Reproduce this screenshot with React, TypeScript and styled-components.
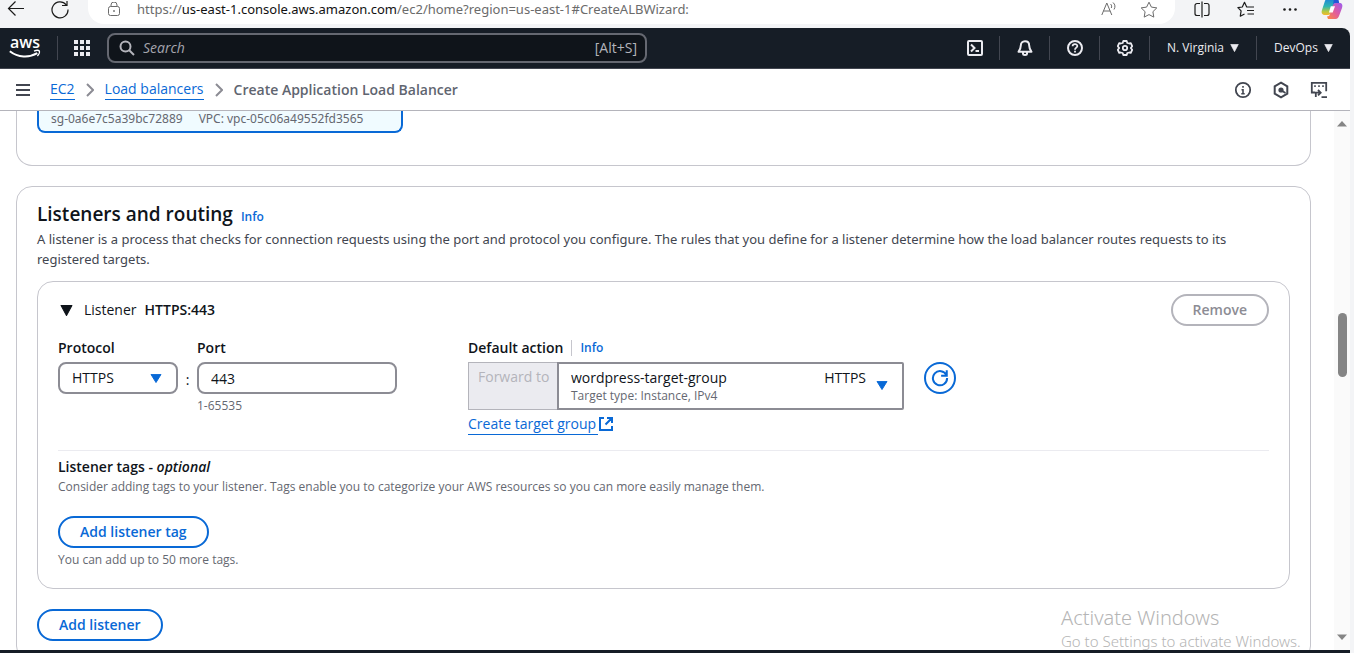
import React from "react";
import styled, { createGlobalStyle } from "styled-components";

const ui = `"Open Sans", "Noto Sans", sans-serif`;
const system = `"Noto Sans", "Open Sans", sans-serif`;
const blue = "#0969d6";

const GlobalStyle = createGlobalStyle`
  * { box-sizing: border-box; }
  body { margin: 0; overflow: hidden; }
  button, input, select { font: inherit; color: inherit; }
  h1, h2, p { margin: 0; }
`;

const Page = styled.div`
  position: relative;
  display: flex;
  flex-direction: column;
  height: 100vh;
  background: #f3f4f6;
  color: #0f141a;
  font: 14px/20px ${ui};
`;

/* Browser toolbar */
const BrowserBar = styled.div`
  display: flex;
  flex: none;
  height: 28px;
  color: #1b1b1b;
`;
const BrowserButton = styled.button`
  display: flex;
  flex: none;
  width: ${(p: { $width?: number }) => p.$width ?? 44}px;
  height: 20px;
  padding: 0;
  border: 0;
  background: none;
  justify-content: center;
  align-items: center;
  svg { display: block; }
`;
const BrowserNav = styled.div`
  display: flex;
  width: 88px;
`;
const AddressBar = styled.div`
  display: flex;
  flex: 1;
  height: 24px;
  padding: 0 6px 0 17px;
  border-radius: 0 0 16px 16px;
  background: #fff;
  color: #6b6b6b;
`;
const Url = styled.div`
  flex: 1;
  padding-left: 14px;
  font: 13px/18px ${system};
  white-space: nowrap;
  b { font-weight: 400; color: #111; }
`;
const BrowserActions = styled.div`
  display: flex;
  padding-left: 5px;
  padding-right: 2px;
`;

/* Console window */
const Console = styled.div`
  display: flex;
  flex: 1;
  min-height: 0;
  flex-direction: column;
  margin-right: 4px;
  border-bottom: 3px solid #161d26;
  border-radius: 0 8px 0 0;
  overflow: hidden;
  background: #fff;
`;
const TopNav = styled.header`
  display: flex;
  flex: none;
  height: 41px;
  align-items: center;
  border-bottom: 1px solid #424650;
  background: #161d26;
  color: #ebebf0;
`;
const LogoLink = styled.a`
  display: flex;
  width: 57px;
  padding-left: 9px;
`;
const AppsButton = styled.button`
  display: flex;
  width: 50px;
  height: 24px;
  align-items: center;
  padding: 0 2px 0 0;
  border: 0;
  border-left: 1px solid #424650;
  background: none;
  justify-content: center;
`;
const SearchBox = styled.label`
  display: flex;
  flex: 0 1 540px;
  height: 30px;
  align-items: center;
  gap: 8px;
  padding: 0 8px 0 10px;
  border: 2px solid #656871;
  border-radius: 8px;
  background: #0f141a;
  color: #b4b4bb;
`;
const SearchInput = styled.input`
  flex: 1;
  min-width: 0;
  padding: 0;
  border: 0;
  outline: 0;
  background: none;
  &::placeholder { color: #a4a4ad; font-style: italic; opacity: 1; }
`;
const NavTools = styled.nav`
  display: flex;
  margin-left: auto;
`;
const NavButton = styled.button<{ $width?: number }>`
  display: flex;
  width: ${(p) => p.$width ?? 50}px;
  height: 24px;
  align-items: center;
  justify-content: center;
  gap: 6px;
  padding: 0;
  border: 0;
  border-right: 1px solid #424650;
  background: none;
  font-size: 12px;
  font-weight: 500;
  white-space: nowrap;
  &:last-child { border-right: 0; }
`;

const CrumbBar = styled.div`
  display: flex;
  flex: none;
  height: 42px;
  align-items: center;
  padding: 0 22px 0 15px;
  border-bottom: 1px solid #b4b4bb;
`;
const Crumbs = styled.nav`
  display: flex;
  flex: 1;
  align-items: center;
  gap: 11px;
  margin-left: 19px;
  color: #5f6570;
`;
const Link = styled.a`
  color: ${blue};
  text-decoration: none;
  border-bottom: 1px solid ${blue};
  line-height: 20px;
`;
const Current = styled.span`
  font-weight: 600;
`;
const IconButton = styled.button`
  display: flex;
  padding: 0;
  border: 0;
  background: none;
  color: #424650;
`;
const PanelIcons = styled.div`
  display: flex;
  gap: 20px;
`;

const Body = styled.div`
  display: flex;
  flex: 1;
  min-height: 0;
`;
const Content = styled.main`
  display: flex;
  flex: 1;
  flex-direction: column;
  gap: 20px;
  min-width: 0;
  padding: 0 23px 0 16px;
  overflow: hidden;
`;
const Scrollbar = styled.div`
  display: flex;
  width: 16px;
  flex-direction: column;
  align-items: center;
  padding: 9px 0;
  background: #fafafa;
  color: #858585;
`;
const ScrollSpace = styled.div<{ $grow: number }>`
  flex: ${(p) => p.$grow};
`;
const Thumb = styled.div`
  width: 9px;
  height: 64px;
  border-radius: 5px;
  background: #858585;
`;

const PreviousPanel = styled.section`
  flex: none;
  padding: 0 20px 32px;
  border: 1px solid #c6c6cd;
  border-top: 0;
  border-radius: 0 0 16px 16px;
`;
const SecurityToken = styled.div`
  display: flex;
  width: 366px;
  gap: 16px;
  padding: 0 12px 4px;
  border: 2px solid ${blue};
  border-top: 0;
  border-radius: 0 0 8px 8px;
  background: #f0fbff;
  color: #656871;
  font: 12px/16px ${system};
`;
const Panel = styled.section`
  flex: none;
  padding: 15px 20px 20px;
  border: 1px solid #c6c6cd;
  border-radius: 16px;
`;
const TitleRow = styled.div`
  display: flex;
  align-items: baseline;
  gap: 8px;
`;
const Title = styled.h1`
  font-size: 19px;
  line-height: 24px;
  font-weight: 600;
`;
const InfoLink = styled.a`
  color: ${blue};
  font-size: 12px;
  font-weight: 600;
  text-decoration: none;
`;
const Description = styled.p`
  margin-top: 2px;
  color: #424650;
  font-family: ${system};
  font-size: 13px;
`;
const Card = styled.section`
  margin: 12px 0 20px;
  padding: 12px 20px 20px;
  border: 1px solid #c6c6cd;
  border-radius: 16px;
`;
const CardHeader = styled.div`
  display: flex;
  align-items: center;
  justify-content: space-between;
`;
const Expander = styled.button`
  display: flex;
  align-items: center;
  gap: 8px;
  padding: 0;
  border: 0;
  background: none;
  svg { margin: 0 3px 0 2px; }
  b { font-weight: 600; }
`;
const PillButton = styled.button`
  height: 32px;
  padding: 0 20px;
  border: 2px solid ${blue};
  border-radius: 16px;
  background: #fff;
  color: ${blue};
  font-weight: 600;
  line-height: 20px;
  white-space: nowrap;
  &:disabled { border-color: #b4b4bb; color: #8c8c94; }
`;
const Fields = styled.div`
  display: grid;
  grid-template-columns: 400fr 801fr;
  column-gap: 10px;
  margin-top: 12px;
`;
const PortGroup = styled.div`
  display: flex;
`;
const Field = styled.div<{ $width: number }>`
  display: flex;
  width: ${(p) => p.$width}px;
  flex-direction: column;
  gap: 4px;
`;
const Label = styled.label`
  font-weight: 600;
`;
const Colon = styled.span`
  width: 19px;
  padding-top: 32px;
  text-align: center;
`;
const SelectBox = styled.div`
  display: flex;
  height: 32px;
  align-items: center;
  padding: 0 14px 0 12px;
  border: 2px solid #8c8c94;
  border-radius: 8px;
`;
const PlainSelect = styled.select<{ $fixed?: boolean }>`
  flex: ${(p) => (p.$fixed ? "none" : 1)};
  min-width: 0;
  height: 20px;
  padding: 0;
  border: 0;
  outline: 0;
  appearance: none;
  background: none;
  line-height: 20px;
`;
const TextInput = styled.input`
  height: 32px;
  padding: 0 12px;
  border: 2px solid #8c8c94;
  border-radius: 8px;
  outline: 0;
  background: #fff;
`;
const Hint = styled.p`
  color: #656871;
  font-size: 12px;
  line-height: 16px;
`;
const ActionField = styled.div`
  display: flex;
  flex-direction: column;
  align-items: flex-start;
  gap: 4px;
`;
const ActionLabel = styled.div`
  display: flex;
  align-items: center;
  gap: 8px;
  a { padding-left: 8px; border-left: 1px solid #c6c6cd; line-height: 16px; }
`;
const ActionRow = styled.div`
  display: flex;
  gap: 20px;
`;
const TargetGroup = styled.div`
  display: flex;
`;
const Prefix = styled.span`
  width: 89px;
  padding: 4px 9px;
  border: 1px solid #b4b4bb;
  border-right: 0;
  background: #ebebf0;
  color: #b4b4bb;
  white-space: nowrap;
`;
const TargetBox = styled.div`
  display: flex;
  width: 347px;
  height: 48px;
  padding: 4px 14px 0 12px;
  border: 2px solid #8c8c94;
  border-radius: 0 2px 2px 0;
  > svg { margin: 13px 0 0 10px; }
`;
const TargetText = styled.div`
  display: flex;
  flex: 1;
  flex-direction: column;
`;
const RefreshButton = styled.button`
  display: flex;
  width: 32px;
  height: 32px;
  align-items: center;
  justify-content: center;
  padding: 0;
  border: 2px solid ${blue};
  border-radius: 50%;
  background: #fff;
  color: ${blue};
`;
const ExternalRow = styled.div`
  display: flex;
  align-items: center;
  height: 20px;
  color: ${blue};
  a { padding-right: 2px; }
`;
const Tags = styled.div`
  display: flex;
  flex-direction: column;
  align-items: flex-start;
  margin-top: 16px;
  padding-top: 6px;
  border-top: 1px solid #ebebf0;
`;
const TagsTitle = styled.h2`
  font-size: 14px;
  line-height: 20px;
  font-weight: 600;
`;
const TagsText = styled.p`
  margin: 2px 0 21px;
  color: #656871;
  font-size: 12px;
  line-height: 16px;
`;
const TagLimit = styled(Hint)`
  margin-top: 4px;
`;

const Watermark = styled.div`
  position: absolute;
  right: 57px;
  bottom: 2px;
  width: 236px;
  color: #b5b5b5;
  font: 300 15px/20px ${system};
  pointer-events: none;
  white-space: nowrap;
  p:first-child { font-size: 20px; line-height: 26px; }
`;

const Stroke = ({ size = 16, width = 2, box = 16, children }: {
  size?: number; width?: number; box?: number; children: React.ReactNode;
}) => (
  <svg width={size} height={size} viewBox={`0 0 ${box} ${box}`} fill="none" stroke="currentColor" strokeWidth={width} aria-hidden="true">
    {children}
  </svg>
);

const Caret = ({ width, height, color = "currentColor" }: { width: number; height: number; color?: string }) => (
  <svg width={width} height={height} viewBox="0 0 12 10" preserveAspectRatio="none" aria-hidden="true">
    <path d="M1 .5h10L6 9.5z" fill={color} stroke={color} strokeLinejoin="round" />
  </svg>
);

const Chevron = () => (
  <svg width="8" height="14" viewBox="0 0 8 14" fill="none" stroke="#8c8c94" strokeWidth="2" aria-hidden="true">
    <path d="M1 1l6 6-6 6" />
  </svg>
);

const AwsLogo = () => (
  <svg width="40" height="40" viewBox="0 0 40 40" aria-hidden="true">
    <text x="1" y="20" fontFamily="Open Sans, sans-serif" fontWeight="600" fontSize="16" fill="#fff">aws</text>
    <path d="M.8 23.200C9 29.600 20 30 28.300 25.200" fill="none" stroke="#fff" strokeWidth="2" />
    <path d="M25 23.200c2-.9 4.600-.9 5.300-.2.5 1-.3 3.500-1.900 5" fill="none" stroke="#fff" strokeWidth="1.400" />
  </svg>
);

const Copilot = () => (
  <svg width="24" height="24" viewBox="0 0 24 24" aria-hidden="true">
    <defs>
      <linearGradient id="cool" x1="0" y1="0" x2="0" y2="1">
        <stop offset="0" stopColor="#1b7fe0" /><stop offset=".5" stopColor="#2fb6b0" />
        <stop offset=".8" stopColor="#b7c940" /><stop offset="1" stopColor="#f5b82e" />
      </linearGradient>
      <linearGradient id="warm" x1="1" y1="0" x2="0" y2="1">
        <stop offset="0" stopColor="#9a5cf0" /><stop offset=".5" stopColor="#e05ba0" />
        <stop offset="1" stopColor="#ff8a3c" />
      </linearGradient>
    </defs>
    <path d="M16 0H8.500C6.500 0 5.400 1.600 4.700 3.800L2 12c-1 3 0 5 2.500 5H8c2 0 2.800-1.200 3.400-3.200L14 5c.5-1.800 1.200-2.500 3-2.500L16 0z" fill="url(#cool)" />
    <path d="M8 21h7.500c2 0 3.100-1.600 3.800-3.800L22 10c1-3 0-5-2.500-5H16c-2 0-2.800 1.200-3.400 3.200L10 16c-.5 1.800-1.200 2.500-3 2.500L8 21z" fill="url(#warm)" />
    <path d="M14 0h2c1.500 0 2.200 1 2.700 2.500L19.200 5H16c-1.500 0-2.300.7-2.900 2z" fill="#2457d6" />
    <path d="M10.800 8.200h4.200l-2.300 6.300H8.900z" fill="#fff" />
  </svg>
);

export default function App() {
  return (
    <Page>
      <GlobalStyle />
      <BrowserBar>
        <BrowserNav>
          <BrowserButton $width={32} aria-label="Back">
            <Stroke size={18} box={18} width={1.200}><path d="M17 7.500H1.500M8.500 .5l-7 7 7 7" /></Stroke>
          </BrowserButton>
          <BrowserButton $width={56} aria-label="Refresh page">
            <Stroke size={18} box={18} width={1.200}><path d="M15.200 3.800A8 8 0 1 0 17 8.500M16 0v4.500h-5" /></Stroke>
          </BrowserButton>
        </BrowserNav>
        <AddressBar>
          <BrowserButton $width={18} aria-label="Site information">
            <Stroke size={16} width={1}><rect x="2.500" y="4.500" width="11" height="9" rx="2" /><path d="M5 4.500V3a3 3 0 0 1 6 0v1.500" /><circle cx="8" cy="9" r=".5" fill="currentColor" /></Stroke>
          </BrowserButton>
          <Url>https://<b>us-east-1.console.aws.amazon.com</b>/ec2/home?region=us-east-1#CreateALBWizard:</Url>
          <BrowserButton $width={40} aria-label="Read aloud">
            <Stroke size={16} width={1}><path d="M.8 13L5.800 1l5 12M2.500 9h6.600M9.500 2c1.300 1.200 1.400 2.500.8 4M12 .5c2.300 2 2.500 4.500 1 7" /></Stroke>
          </BrowserButton>
          <BrowserButton $width={40} aria-label="Favorite">
            <Stroke size={18} box={18} width={1}><path d="M9 1.200l2.400 4.900 5.400.8-3.900 3.800.9 5.400L9 13.600l-4.800 2.500.9-5.400L1.200 6.900l5.400-.8z" /></Stroke>
          </BrowserButton>
        </AddressBar>
        <BrowserActions>
          <BrowserButton aria-label="Split screen">
            <Stroke size={18} box={18} width={1.200}><path d="M7 2.500H4a2 2 0 0 0-2 2v8a2 2 0 0 0 2 2h3M11 2.500h3a2 2 0 0 1 2 2v8a2 2 0 0 1-2 2h-3M9 .5v16" /></Stroke>
          </BrowserButton>
          <BrowserButton aria-label="Favorites list">
            <Stroke size={18} box={18} width={1.200}><path d="M11.500 6H9.700L7.500 1.300 5.300 6 .9 6.700l3.200 3.200-.8 5.300L7.500 13M11 6h6M10 9.500h7M10.500 13H17" strokeLinejoin="round" /></Stroke>
          </BrowserButton>
          <BrowserButton aria-label="More">
            <svg width="16" height="16" viewBox="0 0 16 16" fill="currentColor"><circle cx="2.500" cy="7.500" r="1.300" /><circle cx="8" cy="7.500" r="1.300" /><circle cx="13.500" cy="7.500" r="1.300" /></svg>
          </BrowserButton>
          <BrowserButton $width={40} aria-label="Copilot"><Copilot /></BrowserButton>
        </BrowserActions>
      </BrowserBar>

      <Console>
        <TopNav>
          <LogoLink href="#" aria-label="AWS home"><AwsLogo /></LogoLink>
          <AppsButton aria-label="Services">
            <svg width="16" height="16" viewBox="0 0 16 16" fill="currentColor">
              {[0, 6, 12].map((y) => [0, 6, 12].map((x) => <rect key={`${x}-${y}`} x={x} y={y} width="4" height="4" />))}
            </svg>
          </AppsButton>
          <SearchBox>
            <Stroke><circle cx="6.500" cy="6.500" r="5" /><path d="M10 10l5 5" /></Stroke>
            <SearchInput type="search" placeholder="Search" aria-label="Search" />
            <span>[Alt+S]</span>
          </SearchBox>
          <NavTools>
            <NavButton aria-label="CloudShell">
              <Stroke><rect x="1" y="1" width="14" height="14" rx="1" /><path d="M4 4.500L7.500 8 4 11.500M8.500 11H12" /></Stroke>
            </NavButton>
            <NavButton aria-label="Notifications">
              <Stroke><path d="M8 1.200c-2.600 0-4.200 1.800-4.200 4.300 0 3-1 4.500-2.300 6.300h13c-1.300-1.800-2.300-3.300-2.300-6.300C12.200 3 10.600 1.200 8 1.200zM6 12v1.500c0 2 4 2 4 0V12" strokeLinejoin="round" /></Stroke>
            </NavButton>
            <NavButton aria-label="Help">
              <Stroke><circle cx="8" cy="8" r="7" /><path d="M5.600 6.200C5.700 3.400 10.400 3.500 10.300 6.200 10.200 7.700 8 7.700 8 9.800M8 10.700v1.800" strokeWidth="1.800" /></Stroke>
            </NavButton>
            <NavButton aria-label="Settings">
              <Stroke><path d="M6.300 1h3.400l.6 2 2 .5 1.500-.3 1.400 3L13.800 8l1.400 1.800-1.400 3-1.500-.3-2 .5-.6 2H6.300l-.6-2-2-.5-1.500.3-1.400-3L2.200 8 .8 6.200l1.400-3 1.500.3 2-.5z" strokeWidth="1.800" strokeLinejoin="round" /><circle cx="8" cy="8" r="2.200" strokeWidth="1.800" /></Stroke>
            </NavButton>
            <NavButton $width={107}>N. Virginia <Caret width={9} height={8} /></NavButton>
            <NavButton $width={93}>DevOps <Caret width={9} height={8} /></NavButton>
          </NavTools>
        </TopNav>

        <CrumbBar>
          <IconButton aria-label="Open navigation">
            <Stroke><path d="M1 3h14M1 8h14M1 13h14" /></Stroke>
          </IconButton>
          <Crumbs aria-label="Breadcrumb">
            <Link href="#">EC2</Link>
            <Chevron />
            <Link href="#">Load balancers</Link>
            <Chevron />
            <Current>Create Application Load Balancer</Current>
          </Crumbs>
          <PanelIcons>
            <IconButton aria-label="Info panel">
              <Stroke size={18} box={18}><circle cx="9" cy="9" r="7.200" strokeWidth="1.800" /><path d="M9 5v1.800M7.500 8.700H9v4M7.300 12.700h3.400" strokeWidth="1.600" /></Stroke>
            </IconButton>
            <IconButton aria-label="Diagnostics">
              <Stroke size={18} box={18}><path d="M9 1.700l6.300 3.600v7.400L9 16.300l-6.300-3.600V5.300z" /><circle cx="9" cy="9" r="2.600" fill="currentColor" stroke="none" /><path d="M9.500 9.500l4 2.400" strokeWidth="1.800" /></Stroke>
            </IconButton>
            <IconButton aria-label="Console recorder">
              <Stroke size={18} box={18} width={1.800}><path d="M5 11.500H1.800V1.800h14.400v8.400M4.200 5.200h1.600M8.200 5.200h1.600M12.200 5.200h1.600M5.800 16v-4.300h4M8 9l2.700 2.700L8 14.400M11.500 16.200H17" /></Stroke>
            </IconButton>
          </PanelIcons>
        </CrumbBar>

        <Body>
          <Content>
            <PreviousPanel aria-label="Security groups">
              <SecurityToken><span>sg-0a6e7c5a39bc72889</span><span>VPC: vpc-05c06a49552fd3565</span></SecurityToken>
            </PreviousPanel>
            <Panel>
              <TitleRow><Title>Listeners and routing</Title><InfoLink href="#">Info</InfoLink></TitleRow>
              <Description>
                A listener is a process that checks for connection requests using the port and protocol you configure. The rules that you define for a listener determine how the load balancer routes requests to its registered targets.
              </Description>
              <Card>
                <CardHeader>
                  <Expander aria-expanded="true"><Caret width={13} height={11} /><span>Listener</span><b>HTTPS:443</b></Expander>
                  <PillButton disabled>Remove</PillButton>
                </CardHeader>
                <Fields>
                  <PortGroup>
                    <Field $width={120}>
                      <Label htmlFor="protocol">Protocol</Label>
                      <SelectBox>
                        <PlainSelect id="protocol" defaultValue="HTTPS"><option>HTTPS</option><option>HTTP</option></PlainSelect>
                        <Caret width={12} height={9} color={blue} />
                      </SelectBox>
                    </Field>
                    <Colon>:</Colon>
                    <Field $width={200}>
                      <Label htmlFor="port">Port</Label>
                      <TextInput id="port" defaultValue="443" inputMode="numeric" />
                      <Hint>1-65535</Hint>
                    </Field>
                  </PortGroup>
                  <ActionField>
                    <ActionLabel><Label htmlFor="target">Default action</Label><InfoLink href="#">Info</InfoLink></ActionLabel>
                    <ActionRow>
                      <TargetGroup>
                        <Prefix>Forward to</Prefix>
                        <TargetBox>
                          <TargetText>
                            <PlainSelect id="target" $fixed><option>wordpress-target-group</option></PlainSelect>
                            <Hint>Target type: Instance, IPv4</Hint>
                          </TargetText>
                          <span>HTTPS</span>
                          <Caret width={12} height={9} color={blue} />
                        </TargetBox>
                      </TargetGroup>
                      <RefreshButton aria-label="Refresh target groups">
                        <Stroke size={18} width={1.800}><path d="M13.700 5.500A6.300 6.300 0 1 0 14.300 8M14 1v5H9" /></Stroke>
                      </RefreshButton>
                    </ActionRow>
                    <ExternalRow>
                      <Link href="#">Create target group</Link>
                      <Stroke><path d="M6 2H2v12h12v-4M9 2h5v5M14 2L7.500 8.500" /></Stroke>
                    </ExternalRow>
                  </ActionField>
                </Fields>
                <Tags>
                  <TagsTitle>Listener tags - <em>optional</em></TagsTitle>
                  <TagsText>Consider adding tags to your listener. Tags enable you to categorize your AWS resources so you can more easily manage them.</TagsText>
                  <PillButton>Add listener tag</PillButton>
                  <TagLimit>You can add up to 50 more tags.</TagLimit>
                </Tags>
              </Card>
              <PillButton>Add listener</PillButton>
            </Panel>
          </Content>
          <Scrollbar aria-hidden="true">
            <svg width="10" height="7" viewBox="0 0 10 7"><path d="M0 6.500L5 1l5 5.500z" fill="currentColor" /></svg>
            <ScrollSpace $grow={183} />
            <Thumb />
            <ScrollSpace $grow={253} />
            <svg width="10" height="7" viewBox="0 0 10 7"><path d="M0 .5L5 6l5-5.500z" fill="currentColor" /></svg>
          </Scrollbar>
        </Body>
      </Console>
      <Watermark><p>Activate Windows</p><p>Go to Settings to activate Windows.</p></Watermark>
    </Page>
  );
}
